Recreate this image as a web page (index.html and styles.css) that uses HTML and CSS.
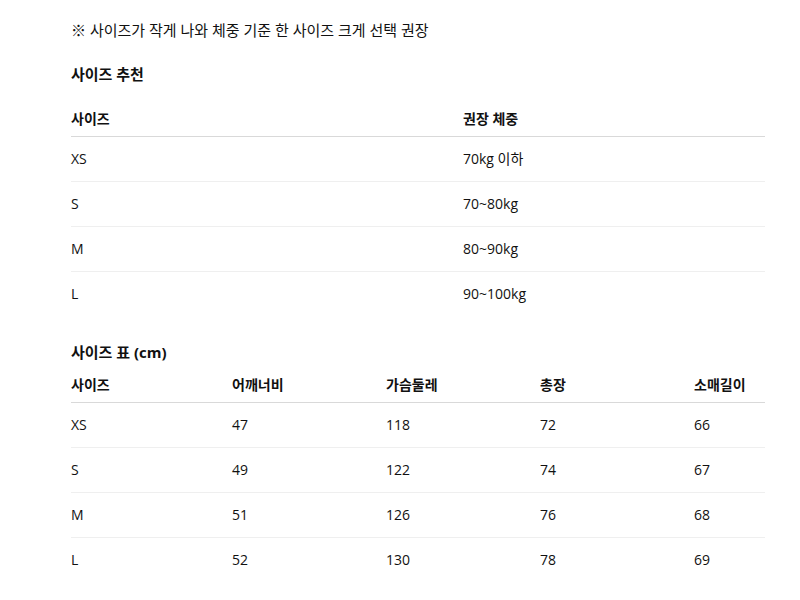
FILE: index.html
```html
<!DOCTYPE html>
<html lang="ko">
<head>
<meta charset="utf-8">
<link rel="stylesheet" href="styles.css">
</head>
<body>
<div class="wrap">
  <p class="note">※ 사이즈가 작게 나와 체중 기준 한 사이즈 크게 선택 권장</p>

  <h3 class="title title-rec">사이즈 추천</h3>
  <table class="tbl tbl-rec">
    <colgroup><col class="c-rec1"><col class="c-rec2"></colgroup>
    <thead>
      <tr><th>사이즈</th><th>권장 체중</th></tr>
    </thead>
    <tbody>
      <tr><td>XS</td><td>70kg 이하</td></tr>
      <tr><td>S</td><td>70~80kg</td></tr>
      <tr><td>M</td><td>80~90kg</td></tr>
      <tr><td>L</td><td>90~100kg</td></tr>
    </tbody>
  </table>

  <h3 class="title title-size">사이즈 표 (cm)</h3>
  <table class="tbl tbl-size">
    <colgroup><col class="c1"><col class="c2"><col class="c2"><col class="c2"><col class="c5"></colgroup>
    <thead>
      <tr><th>사이즈</th><th>어깨너비</th><th>가슴둘레</th><th>총장</th><th>소매길이</th></tr>
    </thead>
    <tbody>
      <tr><td>XS</td><td>47</td><td>118</td><td>72</td><td>66</td></tr>
      <tr><td>S</td><td>49</td><td>122</td><td>74</td><td>67</td></tr>
      <tr><td>M</td><td>51</td><td>126</td><td>76</td><td>68</td></tr>
      <tr><td>L</td><td>52</td><td>130</td><td>78</td><td>69</td></tr>
    </tbody>
  </table>
</div>
</body>
</html>
```

FILE: styles.css
```css
html, body {
  margin: 0;
  padding: 0;
  background: #fff;
}
body {
  font-family: "Open Sans", "Noto Sans CJK KR", sans-serif;
  color: #111;
}
.wrap {
  width: 694px;
  margin-left: 71px;
  padding-top: 19px;
}
.note {
  margin: 0;
  font-size: 15px;
  line-height: 22px;
}
.title {
  margin: 0;
  font-size: 15px;
  line-height: 22px;
  font-weight: 700;
}
.title-rec {
  margin-top: 22px;
  margin-bottom: 16px;
}
.title-size {
  margin-top: 25px;
  margin-bottom: 4px;
}
.tbl {
  width: 694px;
  border-collapse: collapse;
  table-layout: fixed;
  font-size: 14px;
  line-height: 20px;
}
.tbl th {
  text-align: left;
  font-weight: 700;
  padding: 8px 0 7px;
  border-bottom: 1px solid #d9d9d9;
}
.tbl td {
  padding: 12px 0;
  border-bottom: 1px solid #efefef;
}
.tbl tbody tr:last-child td {
  border-bottom: none;
}
.c-rec1 { width: 392px; }
.c-rec2 { width: 302px; }
.c1 { width: 161px; }
.c2 { width: 154px; }
.c5 { width: 71px; }
```
